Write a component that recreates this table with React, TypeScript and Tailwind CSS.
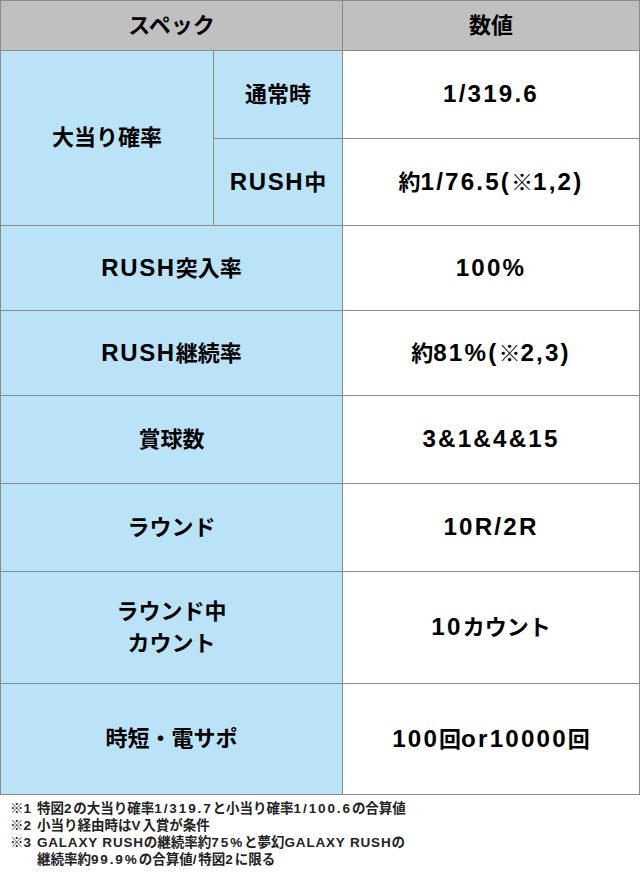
const font = { fontFamily: '"Liberation Sans", "Noto Sans CJK JP", sans-serif' };

// latin runs in the reference are set wider than the kana/kanji around them
const L = ({ children }: { children: React.ReactNode }) => (
  <span className="text-[1.09em] tracking-[0.07em]">{children}</span>
);
const V = ({ children }: { children: React.ReactNode }) => (
  <span className="text-[1.1em] tracking-[0.09em]">{children}</span>
);
const N = ({ children }: { children: React.ReactNode }) => (
  <span className="tracking-[0.14em]">{children}</span>
);
const W = ({ children }: { children: React.ReactNode }) => (
  <span className="tracking-[0.06em]">{children}</span>
);

const Label = ({ children, className = '' }: { children: React.ReactNode; className?: string }) => (
  <div className={`flex items-center justify-center bg-[#bbe3f8] text-center text-[22px] font-bold leading-[32px] text-black ${className}`}>
    <div>{children}</div>
  </div>
);

const Value = ({ children, className = '' }: { children: React.ReactNode; className?: string }) => (
  <div className={`flex items-center justify-center bg-white text-[22px] font-bold text-black ${className}`}>
    <div>{children}</div>
  </div>
);

const App = () => {
  return (
    <div className="w-[640px] h-[872px] bg-white" style={font}>
      {/* spec table */}
      <div className="grid grid-cols-[212px_128px_296px] grid-rows-[49px_87px_86px_84px_84px_87px_87px_111px_110px] gap-px bg-[#8a8a8a] p-px">
        <div className="col-span-2 flex items-center justify-center bg-[#c0c0c0] text-[22px] font-bold">スペック</div>
        <div className="flex items-center justify-center bg-[#c0c0c0] text-[22px] font-bold">数値</div>

        <Label className="row-span-2">大当り確率</Label>
        <Label>通常時</Label>
        <Value><V>1/319.6</V></Value>
        <Label><L>RUSH</L>中</Label>
        <Value>約<V>1/76.5(</V>※<V>1,2)</V></Value>

        <Label className="col-span-2"><L>RUSH</L>突入率</Label>
        <Value><V>100%</V></Value>

        <Label className="col-span-2"><L>RUSH</L>継続率</Label>
        <Value>約<V>81%(</V>※<V>2,3)</V></Value>

        <Label className="col-span-2">賞球数</Label>
        <Value><V>3&amp;1&amp;4&amp;15</V></Value>

        <Label className="col-span-2">ラウンド</Label>
        <Value><V>10R/2R</V></Value>

        <Label className="col-span-2">
          ラウンド中
          <br />
          カウント
        </Label>
        <Value><V>10</V>カウント</Value>

        <Label className="col-span-2">時短・電サポ</Label>
        <Value><V>100</V>回<V>or10000</V>回</Value>
      </div>

      {/* notes */}
      <div className="px-[10px] pt-[5px] text-[13.5px] font-bold leading-[17px] text-[#222]">
        <div className="flex gap-[4px]">
          <span className="shrink-0">※<N>1</N></span>
          <span>特図<N>2</N>の大当り確率<N>1/319.7</N>と小当り確率<N>1/100.6</N>の合算値</span>
        </div>
        <div className="flex gap-[4px]">
          <span className="shrink-0">※<N>2</N></span>
          <span>小当り経由時は<N>V</N>入賞が条件</span>
        </div>
        <div className="flex gap-[4px]">
          <span className="shrink-0">※<N>3</N></span>
          <span>
            <W>GALAXY RUSH</W>の継続率約<N>75%</N>と夢幻<W>GALAXY RUSH</W>の
            <br />
            継続率約<N>99.9%</N>の合算値<N>/</N>特図<N>2</N>に限る
          </span>
        </div>
      </div>
    </div>
  );
};

export default App;
